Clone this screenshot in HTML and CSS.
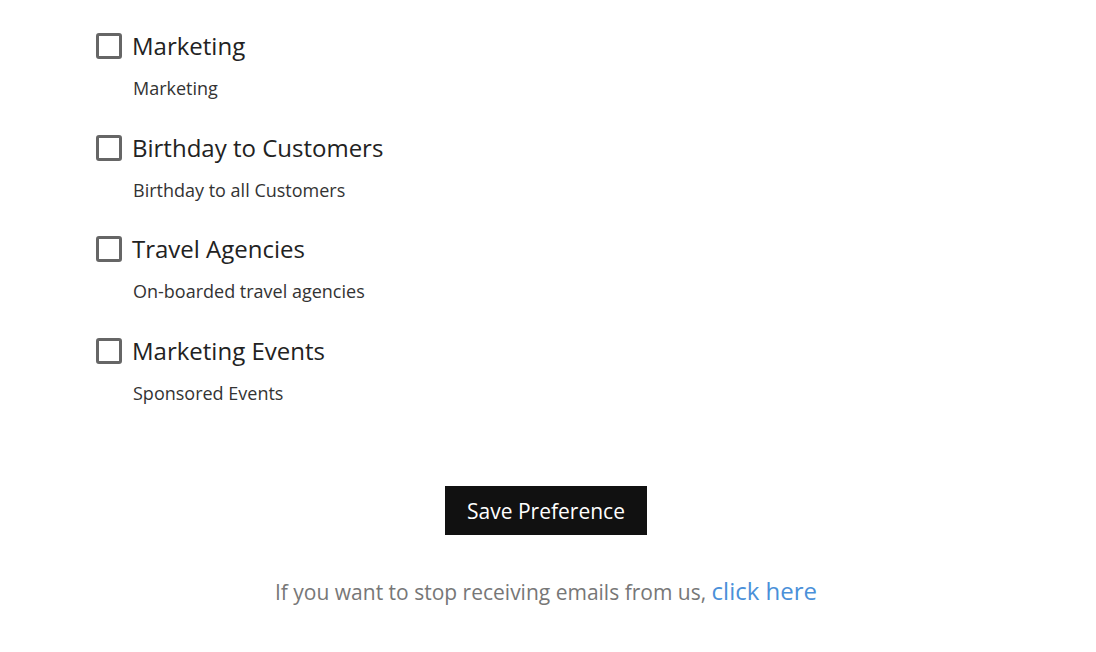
FILE: index.html
```html
<!DOCTYPE html>
<html>
<head>
<meta charset="utf-8">
<link rel="stylesheet" href="styles.css">
</head>
<body>
<div class="page">
  <ul class="prefs">
    <li class="pref">
      <label class="pref-head"><span class="box"></span><span class="pref-title">Marketing</span></label>
      <p class="pref-desc">Marketing</p>
    </li>
    <li class="pref">
      <label class="pref-head"><span class="box"></span><span class="pref-title">Birthday to Customers</span></label>
      <p class="pref-desc">Birthday to all Customers</p>
    </li>
    <li class="pref">
      <label class="pref-head"><span class="box"></span><span class="pref-title">Travel Agencies</span></label>
      <p class="pref-desc">On-boarded travel agencies</p>
    </li>
    <li class="pref">
      <label class="pref-head"><span class="box"></span><span class="pref-title">Marketing Events</span></label>
      <p class="pref-desc">Sponsored Events</p>
    </li>
  </ul>
  <div class="actions">
    <button class="save">Save Preference</button>
  </div>
  <p class="unsub">If you want to stop receiving emails from us, <a href="#" class="link">click here</a></p>
</div>
</body>
</html>
```
FILE: styles.css
```css
html, body {
  margin: 0;
  padding: 0;
  background: #fff;
}
body {
  font-family: "Open Sans", "Liberation Sans", sans-serif;
  color: #222;
}
.page {
  width: 1096px;
  padding-top: 32px;
}
.prefs {
  list-style: none;
  margin: 0;
  padding: 0 0 0 95px;
  display: flex;
  flex-direction: column;
}
.pref {
  height: 101.5px;
}
.pref-head {
  display: flex;
  align-items: center;
  gap: 10px;
  height: 28px;
}
.box {
  width: 20px;
  height: 20px;
  border: 3px solid #666;
  border-radius: 3px;
  flex: none;
  margin-left: 1px;
}
.pref-title {
  font-size: 24px;
  color: #222;
  line-height: 28px;
}
.pref-desc {
  margin: 16px 0 0 38px;
  font-size: 18px;
  color: #333;
  line-height: 24px;
}
.actions {
  display: flex;
  justify-content: center;
  margin-top: 48px;
  padding-right: 4px;
}
.save {
  background: #111;
  color: #fff;
  border: none;
  font-family: "Open Sans", "Liberation Sans", sans-serif;
  font-size: 21px;
  width: 202px;
  height: 49px;
  padding: 0;
  cursor: pointer;
}
.unsub {
  text-align: center;
  margin: 41px 0 0;
  padding-right: 4px;
  font-size: 21px;
  color: #777;
  line-height: 30px;
}
.link {
  color: #4a90d9;
  text-decoration: none;
  font-size: 24px;
}
```
